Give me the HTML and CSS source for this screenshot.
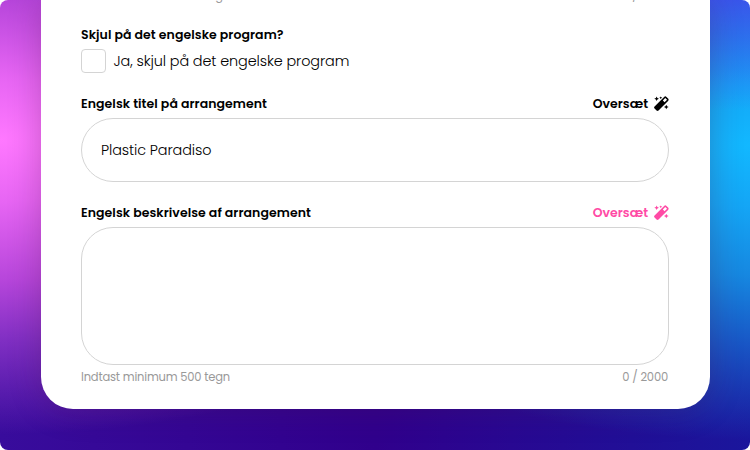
FILE: index.html
```html
<!DOCTYPE html>
<html lang="da">
<head>
    <meta charset="UTF-8">
    <meta name="viewport" content="width=device-width, initial-scale=1.0">
    <title>Arrangement</title>
    <link rel="stylesheet" href="styles.css">
</head>
<body>
    <svg width="0" height="0" class="sprite">
        <symbol id="wand" viewBox="0 0 16 16">
            <path fill-rule="evenodd" d="M.6 11.2 10.8 1a1.8 1.8 0 0 1 2.5 0l1.7 1.7a1.8 1.8 0 0 1 0 2.5L4.8 15.4a1.5 1.5 0 0 1-2.1 0L.6 13.3a1.5 1.5 0 0 1 0-2.1zM9.4 4.7l1.9 1.9 2.6-2.6-1.9-1.9z"/>
            <path d="M2.8.4l.8 1.7 1.7.8-1.7.8-.8 1.7-.8-1.7L.3 2.9 2 2.1zM13.1 9.2l.8 1.7 1.7.8-1.7.8-.8 1.7-.8-1.7-1.7-.8 1.7-.8zM7.2.4l.5 1 1 .5-1 .5-.5 1-.5-1-1-.5 1-.5z"/>
        </symbol>
    </svg>

    <main class="page">
        <form class="card">
            <div class="hint hint-top">
                <span class="hint-text">Indtast minimum 500 tegn</span>
                <span class="count">0 / 2000</span>
            </div>

            <div class="label-row label-row-first">
                <span class="label">Skjul på det engelske program?</span>
            </div>
            <label class="check">
                <input type="checkbox">
                <span>Ja, skjul på det engelske program</span>
            </label>

            <div class="label-row">
                <label class="label" for="title">Engelsk titel på arrangement</label>
                <button type="button" class="translate">Oversæt <svg><use href="#wand"/></svg></button>
            </div>
            <input type="text" id="title" class="field" value="Plastic Paradiso">

            <div class="label-row">
                <label class="label" for="description">Engelsk beskrivelse af arrangement</label>
                <button type="button" class="translate active">Oversæt <svg><use href="#wand"/></svg></button>
            </div>
            <textarea id="description" class="field area"></textarea>

            <div class="hint">
                <span class="hint-text">Indtast minimum 500 tegn</span>
                <span class="count">0 / 2000</span>
            </div>
        </form>
    </main>
</body>
</html>
```

FILE: styles.css
```css
* {
    box-sizing: border-box;
}
body {
    margin: 0;
    background: #fff;
    font-family: Poppins, Inter, sans-serif;
    color: #000;
}
.sprite {
    display: none;
}
.page {
    height: 450px;
    overflow: hidden;
    border-radius: 8px;
    background:
        linear-gradient(to bottom, rgba(80, 60, 245, 0.6), rgba(80, 60, 245, 0) 110px) right top / 50% 110px no-repeat,
        radial-gradient(ellipse 600px 310px at 0 140px, #ff78ff 0%, rgba(240, 106, 248, 0.95) 20%, rgba(205, 80, 230, 0.85) 45%, rgba(165, 65, 215, 0.65) 65%, rgba(50, 0, 150, 0) 95%),
        radial-gradient(ellipse 600px 310px at 100% 145px, #12b8ff 0%, rgba(20, 170, 248, 0.97) 20%, rgba(22, 145, 230, 0.92) 42%, rgba(24, 105, 210, 0.75) 65%, rgba(26, 22, 156, 0) 95%),
        linear-gradient(to right, #380c9c, #30008c 50%, #1a169c);
}
.card {
    width: 669px;
    height: 409px;
    margin: 0 auto;
    padding: 1px 40.5px 0;
    background: #fff;
    border-radius: 0 0 32px 32px;
    box-shadow: 0 0 32px rgba(80, 20, 70, 0.28);
}
.label-row, .hint {
    display: flex;
    justify-content: space-between;
    align-items: center;
}
.label-row {
    height: 21px;
    margin-bottom: 4px;
}
.label-row-first {
    height: 19px;
    margin-bottom: 6px;
}
.label, .translate {
    font-size: 12.5px;
    font-weight: 600;
}
.label {
    letter-spacing: 0.06px;
}
.translate {
    display: flex;
    align-items: center;
    gap: 6px;
    padding: 0;
    border: none;
    background: none;
    font-family: inherit;
    color: #000;
    cursor: pointer;
}
.translate svg {
    width: 15px;
    height: 15px;
    fill: currentColor;
}
.translate.active {
    color: #ff4aa5;
}
.check {
    display: flex;
    align-items: center;
    gap: 8px;
    height: 24px;
    margin: -1px 0 20px;
    font-size: 14.4px;
    font-weight: 300;
    letter-spacing: -0.1px;
}
.check input {
    appearance: none;
    width: 24.5px;
    height: 24px;
    margin: 0;
    border: 1px solid #d4d4d4;
    border-radius: 4px;
}
.field {
    display: block;
    width: 100%;
    height: 64px;
    margin-bottom: 20px;
    padding: 0 19px;
    border: 1px solid #d4d4d4;
    border-radius: 32px;
    background: #fff;
    font: 300 14.4px Poppins, Inter, sans-serif;
    letter-spacing: -0.1px;
    color: #000;
}
.area {
    height: 138px;
    margin-bottom: 3px;
    resize: none;
}
.hint {
    height: 19px;
    padding-right: 1px;
    font-size: 11.5px;
    letter-spacing: -0.18px;
    color: #999;
}
.hint-top {
    height: 24px;
    transform: translateY(-17px);
}
```
